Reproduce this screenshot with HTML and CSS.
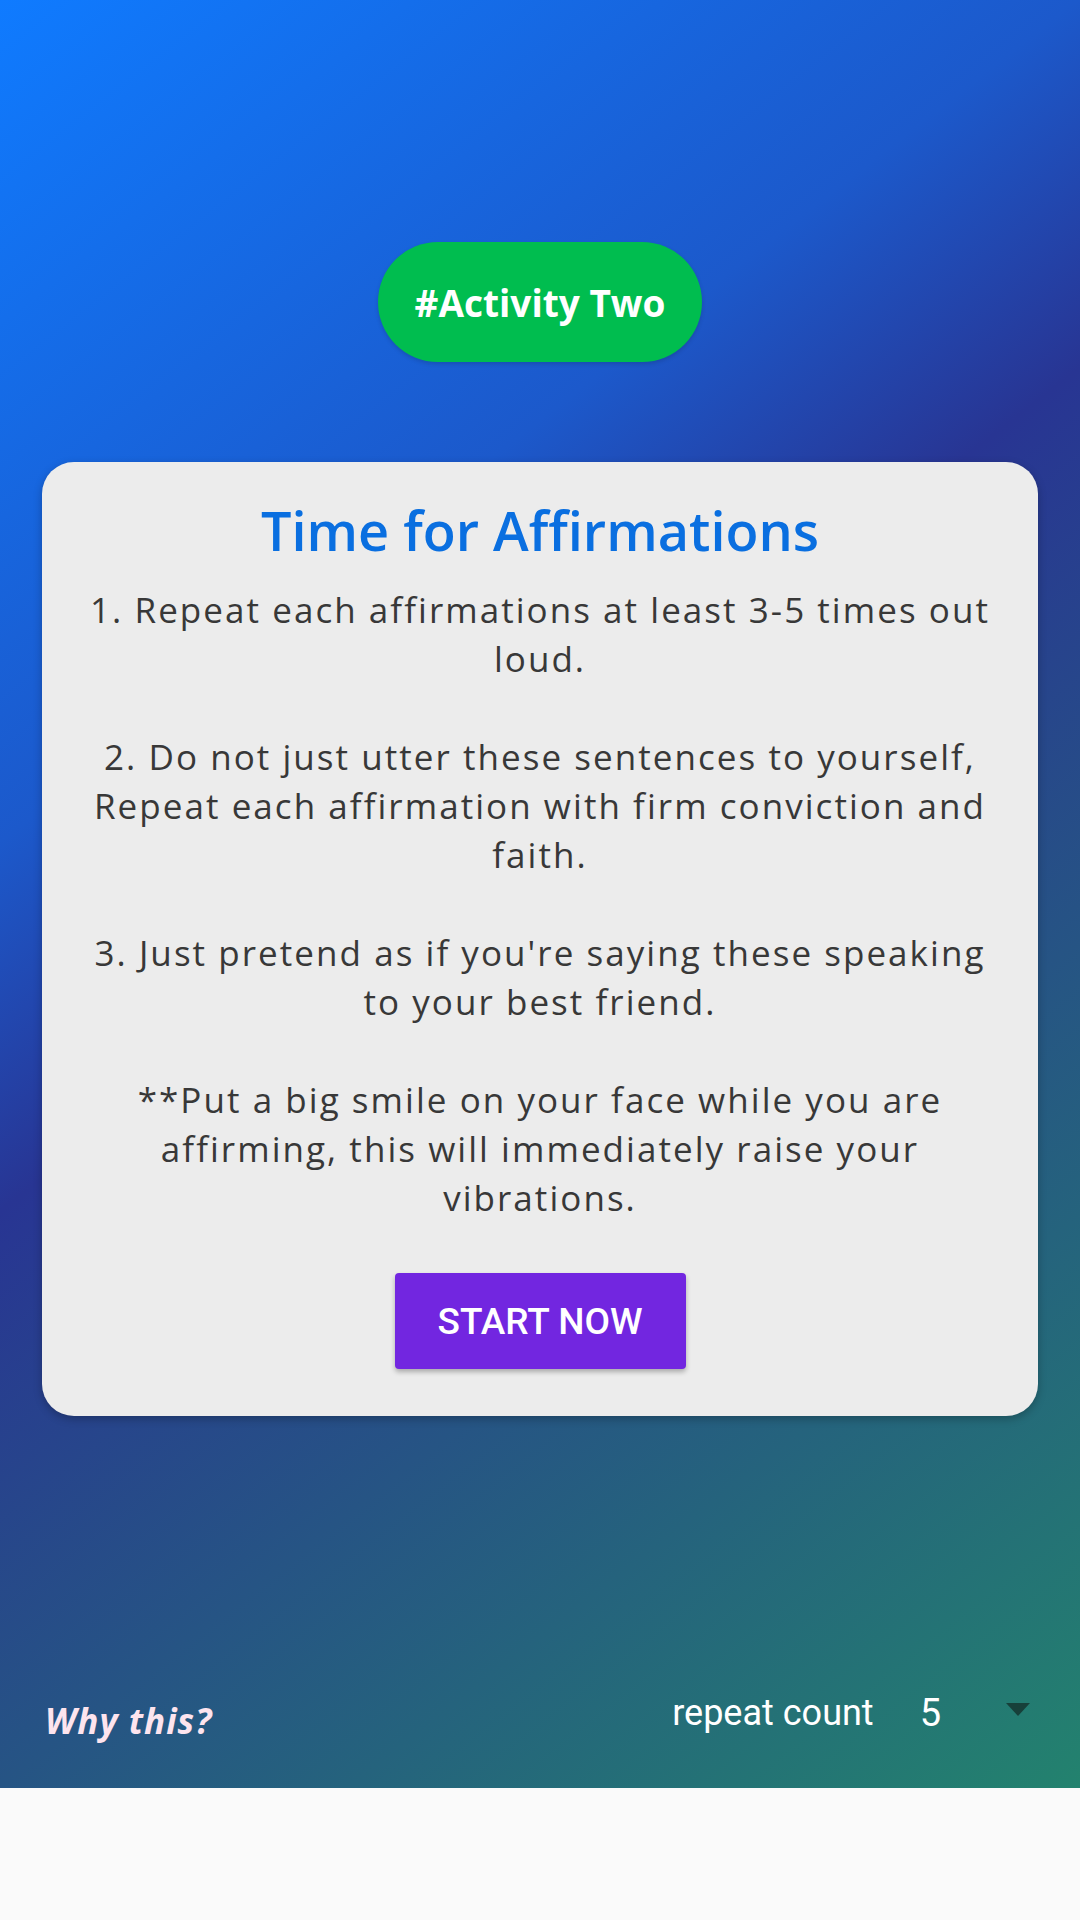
FILE: index.html
```html
<!DOCTYPE html>
<html>
<head>
<meta charset="utf-8">
<link rel="stylesheet" href="styles.css">
</head>
<body>
<div class="screen">
  <div class="pill">#Activity Two</div>
  <div class="card">
    <h1 class="title">Time for Affirmations</h1>
    <p class="body-text">1. Repeat each affirmations at least 3-5 times out<br>loud.<br><br>2. Do not just utter these sentences to yourself,<br>Repeat each affirmation with firm conviction and<br>faith.<br><br>3. Just pretend as if you're saying these speaking<br>to your best friend.<br><br>**Put a big smile on your face while you are<br>affirming, this will immediately raise your<br>vibrations.</p>
    <button class="start-btn">START NOW</button>
  </div>
  <div class="bottom-row">
    <span class="why">Why this?</span>
    <div class="repeat">
      <span class="repeat-label">repeat count</span>
      <span class="repeat-value">5</span>
      <span class="caret"></span>
    </div>
  </div>
</div>
</body>
</html>
```
FILE: styles.css
```css
html, body {
  margin: 0;
  padding: 0;
  background: #fafafa;
}
.screen {
  width: 1080px;
  height: 1788px;
  box-sizing: border-box;
  padding-top: 242px;
  display: flex;
  flex-direction: column;
  align-items: center;
  background: linear-gradient(142deg, #0f7bff 0%, #1c59cb 32%, #283593 46%, #23826e 100%);
}
.pill {
  height: 120px;
  padding: 0 37px;
  border-radius: 60px;
  background: #00bd4f;
  color: #ffffff;
  font-family: "Open Sans", sans-serif;
  font-weight: 700;
  font-size: 37px;
  display: flex;
  align-items: center;
  justify-content: center;
  box-shadow: 0 2px 4px rgba(0,0,0,0.15);
}
.card {
  margin-top: 100px;
  width: 996px;
  box-sizing: border-box;
  padding: 33px 20px 47px;
  background: #ececec;
  border-radius: 32px;
  display: flex;
  flex-direction: column;
  align-items: center;
  box-shadow: 0 3px 8px rgba(0,0,0,0.25);
}
.title {
  margin: 0;
  font-family: "Open Sans", sans-serif;
  font-weight: 600;
  font-size: 54px;
  line-height: 70px;
  color: #0a6fe0;
  text-align: center;
}
.body-text {
  margin: 20px 0 0;
  font-family: "Open Sans", sans-serif;
  font-weight: 500;
  font-size: 35px;
  letter-spacing: 2.05px;
  line-height: 49px;
  color: #383838;
  text-align: center;
  white-space: nowrap;
}
.start-btn {
  margin-top: 51px;
  width: 291px;
  height: 96px;
  border: none;
  border-radius: 4px;
  background: #7226e0;
  color: #ffffff;
  font-family: Roboto, sans-serif;
  font-weight: 500;
  font-size: 37px;
  box-shadow: 0 3px 5px rgba(0,0,0,0.28);
}
.bottom-row {
  margin-top: auto;
  width: 100%;
  box-sizing: border-box;
  padding: 0 50px 44px 45px;
  display: flex;
  align-items: center;
  justify-content: space-between;
}
.why {
  font-family: "Open Sans", sans-serif;
  font-weight: 700;
  font-style: italic;
  font-size: 35px;
  letter-spacing: 1px;
  color: #fde4ee;
  margin-top: 16px;
}
.repeat {
  display: flex;
  align-items: center;
  color: #ffffff;
  font-family: Roboto, sans-serif;
  font-size: 36px;
}
.repeat-value {
  margin-left: 46px;
  font-size: 38px;
}
.caret {
  margin-left: 65px;
  width: 0;
  height: 0;
  border-left: 12.5px solid transparent;
  border-right: 12.5px solid transparent;
  border-top: 13px solid #17403a;
  margin-bottom: 6px;
}
```
